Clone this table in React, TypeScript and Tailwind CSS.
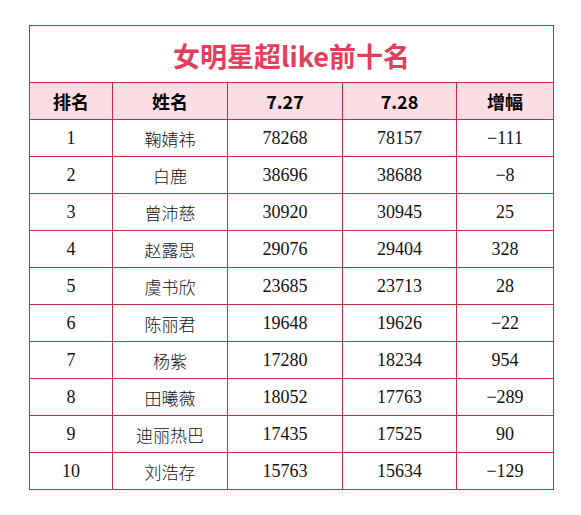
import React from "react";

const rows: [string, string, string, string, string][] = [
  ["1", "鞠婧祎", "78268", "78157", "-111"],
  ["2", "白鹿", "38696", "38688", "-8"],
  ["3", "曾沛慈", "30920", "30945", "25"],
  ["4", "赵露思", "29076", "29404", "328"],
  ["5", "虞书欣", "23685", "23713", "28"],
  ["6", "陈丽君", "19648", "19626", "-22"],
  ["7", "杨紫", "17280", "18234", "954"],
  ["8", "田曦薇", "18052", "17763", "-289"],
  ["9", "迪丽热巴", "17435", "17525", "90"],
  ["10", "刘浩存", "15763", "15634", "-129"],
];

const serif = { fontFamily: '"Liberation Serif", "Noto Sans CJK SC", serif' };
const sans = { fontFamily: '"Noto Sans CJK SC", "Liberation Sans", sans-serif' };

export default function App() {
  return (
    <div className="w-[581px] h-[515px] bg-white pt-[25px] pl-[29px]">
      <table className="border-collapse table-fixed w-[524px]">
        <colgroup>
          <col className="w-[83px]" />
          <col className="w-[115px]" />
          <col className="w-[115px]" />
          <col className="w-[114px]" />
          <col className="w-[97px]" />
        </colgroup>
        <tbody>
          <tr className="h-[57px]">
            <td
              colSpan={5}
              className="border border-[#c02d48] text-center text-[27px] font-bold text-[#e23f5c] leading-none pt-[2px]"
              style={sans}
            >
              女明星超like前十名
            </td>
          </tr>
          <tr className="h-[37px] bg-[#fcdde3]">
            {["排名", "姓名", "7.27", "7.28", "增幅"].map((h) => (
              <td
                key={h}
                className="border border-[#c02d48] text-center text-[18px] font-bold text-black leading-none"
                style={sans}
              >
                {h}
              </td>
            ))}
          </tr>
          {rows.map((r) => (
            <tr key={r[0]} className="h-[37px]">
              {r.map((c, i) => (
                <td
                  key={i}
                  className={
                    "border border-[#c02d48] text-center text-[#111] leading-none " +
                    (i === 1 ? "text-[17px]" : "text-[18px]")
                  }
                  style={i === 1 ? { fontFamily: '"Noto Sans CJK SC", sans-serif', fontWeight: 300 } : serif}
                >
                  {c.startsWith("-") ? "−" + c.slice(1) : c}
                </td>
              ))}
            </tr>
          ))}
        </tbody>
      </table>
    </div>
  );
}
